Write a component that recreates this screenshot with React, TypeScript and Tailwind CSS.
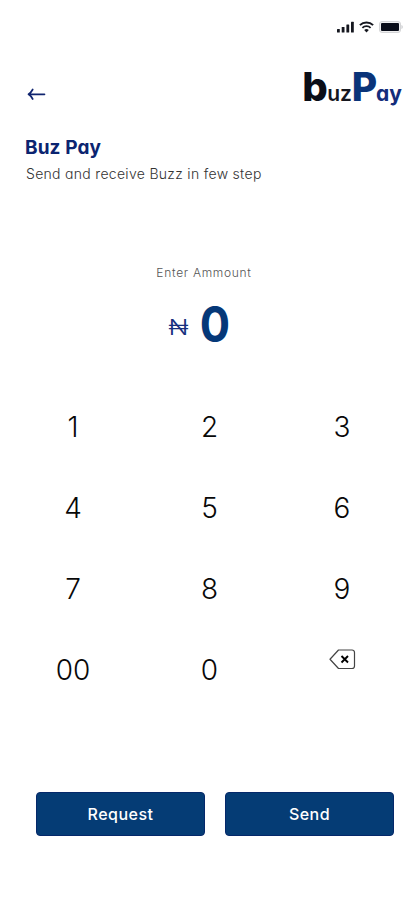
const keys = ["1", "2", "3", "4", "5", "6", "7", "8", "9", "00", "0"];

const StatusBar = () => (
  <div className="flex h-[20px] items-center justify-end gap-x-[5px] pr-[12px]">
    <svg width="17" height="12" viewBox="0 0 17 12" fill="#15171f">
      <rect x="0" y="8" width="2.8" height="3.5" rx="0.5" />
      <rect x="4.7" y="6" width="2.8" height="5.5" rx="0.5" />
      <rect x="9.4" y="3.5" width="2.8" height="8" rx="0.5" />
      <rect x="14" y="0.8" width="2.8" height="10.7" rx="0.5" />
    </svg>
    <svg width="15" height="12" viewBox="0 0 15 12" fill="none" stroke="#15171f">
      <path d="M0.9 4.1a9.4 9.4 0 0 1 13.2 0" strokeWidth="2" />
      <path d="M3.4 6.9a5.8 5.8 0 0 1 8.2 0" strokeWidth="1.8" />
      <path d="M5.2 9a3.3 3.3 0 0 1 4.6 0L7.5 11.4Z" fill="#15171f" stroke="none" />
    </svg>
    <svg width="24" height="12" viewBox="0 0 24 12">
      <rect x="0.5" y="0.5" width="21" height="11" rx="2.5" fill="#eeeeef" stroke="#d3d4d6" />
      <rect x="2" y="2" width="18" height="8" rx="1" fill="#080c18" />
      <path d="M22.5 4v4c1.6-.8 1.6-3.2 0-4Z" fill="#c5c6c9" />
    </svg>
  </div>
);

const Logo = () => (
  <div className="flex items-baseline font-bold leading-none">
    <span className="text-[40px] font-extrabold tracking-[-0.5px] text-[#0b0e17]">b</span>
    <span className="text-[21px] font-semibold tracking-[-0.2px] text-[#15171f]">uz</span>
    <span className="text-[39px] font-extrabold tracking-[-1px] text-[#0a3479]">P</span>
    <span className="text-[21px] text-[#132d7b]">ay</span>
  </div>
);

const BackspaceIcon = () => (
  <svg width="27" height="21" viewBox="0 0 27 21" fill="none" stroke="#444">
    <path
      d="M9.5 1H23a2.5 2.5 0 0 1 2.5 2.5v13.500a2.5 2.5 0 0 1-2.5 2.5H9.5L1 10.250Z"
      strokeWidth="1.2"
      strokeLinejoin="round"
    />
    <path d="m12.500 7 6.500 6.500m0-6.500-6.500 6.500" stroke="#000" strokeWidth="1.9" />
  </svg>
);

const ActionButton = ({ label }: { label: string }) => (
  <button className="h-[44px] w-[169px] rounded-[4px] border border-[#05286a] bg-[#053c75] text-[16px] font-medium leading-none tracking-[0.5px] text-white">
    {label}
  </button>
);

export default function App() {
  return (
    <div className="h-[900px] w-[415px] overflow-hidden bg-white pt-[17px] font-['Inter',sans-serif] [font-feature-settings:'cv11']">
      <StatusBar />

      <header className="mt-[30px] flex h-[40px] items-start justify-between pl-[27px] pr-[13px]">
        <button aria-label="Back" className="mt-[20px]">
          <svg
            width="19"
            height="14"
            viewBox="0 0 19 14"
            fill="none"
            stroke="#10246f"
            strokeWidth="1.7"
            strokeLinecap="round"
            strokeLinejoin="round"
          >
            <path d="M17.500 7.300H2M5.700 2.500C4.600 4.500 3.200 6.200 1.500 7.300C3.200 8.400 4.600 10 5.700 12" />
          </svg>
        </button>
        <Logo />
      </header>

      <div className="mt-[31px] pl-[25px]">
        <h1 className="text-[19px] font-bold leading-[20px] tracking-[0.1px] text-[#0b2470]">
          Buz Pay
        </h1>
        <p className="ml-px mt-[6px] text-[14px] font-light leading-[20px] tracking-[0.3px] text-[#333]">
          Send and receive Buzz in few step
        </p>
      </div>

      <div className="mt-[82px] flex flex-col items-center pr-[7px]">
        <div className="text-[12px] font-light leading-[14px] tracking-[0.7px] text-[#555]">
          Enter Ammount
        </div>
        <div className="mt-[19px] flex h-[50px] items-center gap-x-[11px] pr-[6px] leading-none">
          <span className="mt-[5px] scale-x-120 text-[22px] font-light text-[#17307e]">₦</span>
          <span className="scale-x-90 text-[50px] font-bold text-[#053878]">0</span>
        </div>
      </div>

      <div className="ml-[5px] mt-[37px] grid grid-cols-[136px_137px_128px] auto-rows-[81px] text-[28px] font-light leading-none text-[#080808]">
        {keys.map((key) => (
          <button key={key} className="flex items-center justify-center">
            {key}
          </button>
        ))}
        <button aria-label="Delete" className="flex items-center justify-center pb-[21px]">
          <BackspaceIcon />
        </button>
      </div>

      <div className="mt-[82px] flex gap-x-[20px] pl-[36px]">
        <ActionButton label="Request" />
        <ActionButton label="Send" />
      </div>
    </div>
  );
}
